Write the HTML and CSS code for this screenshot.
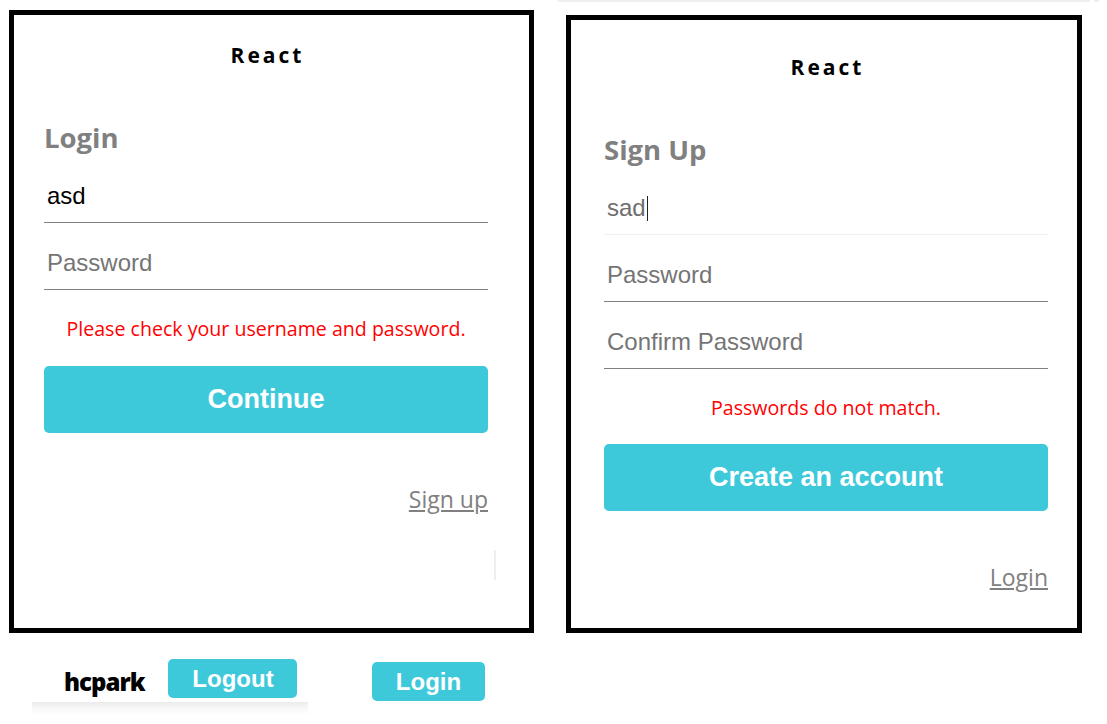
FILE: index.html
```html
<!DOCTYPE html>
<html lang="en">
<head>
<meta charset="utf-8">
<title>React auth screens</title>
<link rel="stylesheet" href="styles.css">
</head>
<body>
<div class="page">
  <div class="col-left">
    <section class="card card-login">
      <div class="content">
        <div class="brand">React</div>
        <h2 class="title">Login</h2>
        <div class="field"><span class="value">asd</span></div>
        <div class="field"><span class="placeholder">Password</span></div>
        <p class="error">Please check your username and password.</p>
        <button class="btn-main" type="button">Continue</button>
        <div class="link-row"><a class="link" href="#">Sign up</a></div>
        <div class="stray"></div>
      </div>
    </section>
    <div class="bottom-row">
      <nav class="navbar">
        <span class="username">hcpark</span>
        <button class="btn-small" type="button">Logout</button>
      </nav>
      <button class="btn-small btn-login" type="button">Login</button>
    </div>
  </div>
  <div class="col-right">
    <div class="topline"><span class="seg-a"></span><span class="seg-b"></span></div>
    <section class="card card-signup">
      <div class="content">
        <div class="brand">React</div>
        <h2 class="title">Sign Up</h2>
        <div class="field field-focus"><span class="value value-gray">sad</span><span class="caret"></span></div>
        <div class="field"><span class="placeholder">Password</span></div>
        <div class="field"><span class="placeholder">Confirm Password</span></div>
        <p class="error">Passwords do not match.</p>
        <button class="btn-main" type="button">Create an account</button>
        <div class="link-row link-row-signup"><a class="link" href="#">Login</a></div>
      </div>
    </section>
  </div>
</div>
</body>
</html>
```

FILE: styles.css
```css
* { box-sizing: border-box; }

html, body {
  margin: 0;
  padding: 0;
  background: #ffffff;
}

body {
  font-family: "Open Sans", "Noto Sans", sans-serif;
  width: 1107px;
  height: 724px;
  overflow: hidden;
}

.page {
  display: flex;
  align-items: flex-start;
}

.col-left {
  padding: 10px 0 0 9px;
  width: 534px;
}

.col-right {
  margin-left: 24px;
}

.topline {
  display: flex;
  align-items: flex-start;
  gap: 4px;
}

.seg-a {
  display: block;
  width: 532px;
  height: 2px;
  background: #efefef;
}

.seg-b {
  display: block;
  width: 5px;
  height: 2px;
  background: #efefef;
}

.card {
  border: 5px solid #000;
  background: #fff;
}

.card-login {
  width: 525px;
  height: 623px;
  padding: 26px 0 0 30px;
}

.card-signup {
  width: 516px;
  height: 618px;
  margin: 13px 0 0 8px;
  padding: 33px 0 0 33px;
}

.content {
  width: 444px;
  display: flex;
  flex-direction: column;
}

.brand {
  font-weight: 700;
  font-size: 21px;
  line-height: 28px;
  letter-spacing: 3px;
  text-align: center;
  color: #000;
  padding-left: 3px;
}

.title {
  margin: 51px 0 0 0;
  font-size: 27.5px;
  line-height: 36px;
  font-weight: 700;
  color: #808080;
}

.field {
  padding: 26px 0 12px 3px;
  border-bottom: 1px solid #808080;
  font-family: "Liberation Sans", Arial, sans-serif;
  font-size: 24px;
  line-height: 28px;
  height: 67px;
  display: flex;
  align-items: center;
}

.field-focus {
  border-bottom-color: #f0f0f0;
}

.value { color: #000; }
.value-gray { color: #6e6e6e; }

.placeholder { color: #757575; }

.caret {
  display: inline-block;
  width: 1px;
  height: 25px;
  background: #222;
  margin-left: 1px;
}

.error {
  margin: 26px 0 0 0;
  text-align: center;
  color: #ff0000;
  font-size: 19.6px;
  line-height: 26px;
}

.btn-main {
  margin-top: 24px;
  height: 67px;
  width: 100%;
  border: none;
  border-radius: 5px;
  background: #3ec9db;
  color: #fff;
  font-family: "Liberation Sans", Arial, sans-serif;
  font-weight: 700;
  font-size: 27px;
  cursor: pointer;
}

.card-signup .btn-main {
  margin-top: 23px;
}

.link-row {
  margin-top: 51px;
  display: flex;
  justify-content: flex-end;
  line-height: 30px;
}

.link {
  color: #808080;
  font-size: 23px;
  text-decoration: underline;
}

.stray {
  width: 2px;
  height: 30px;
  margin: 36px 0 0 450px;
  background: #eeeeee;
}

.bottom-row {
  display: flex;
  align-items: flex-start;
  margin: 17px 0 0 23px;
}

.navbar {
  width: 276px;
  height: 65px;
  display: flex;
  align-items: flex-start;
  padding: 9px 0 0 32px;
  background: linear-gradient(to bottom, #ffffff 0, #ffffff 52px, #ebebeb 52px, #f7f7f7 58px, #ffffff 65px);
}

.username {
  font-weight: 800;
  font-size: 24px;
  line-height: 39px;
  letter-spacing: -1px;
  color: #000;
  margin-right: 24px;
  padding-top: 3px;
}

.btn-small {
  height: 39px;
  border: none;
  border-radius: 5px;
  background: #3ec9db;
  color: #fff;
  font-family: "Liberation Sans", Arial, sans-serif;
  font-weight: 700;
  font-size: 24px;
  padding: 0;
  width: 129px;
  cursor: pointer;
}

.btn-login {
  width: 113px;
  margin: 12px 0 0 64px;
}
```
